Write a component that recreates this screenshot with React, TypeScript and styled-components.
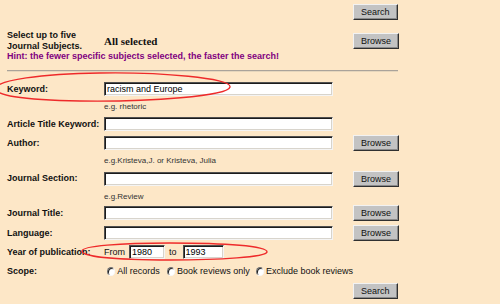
import styled, { createGlobalStyle } from 'styled-components';

const Global = createGlobalStyle`
  html, body {
    margin: 0;
    padding: 0;
    background: #fde7c7;
  }
  body {
    font-family: 'Liberation Sans', Arial, sans-serif;
    color: #111;
  }
`;

const Page = styled.form`
  position: relative;
  width: 500px;
  height: 304px;
  box-sizing: border-box;
  padding: 4px 0 0 7px;
  overflow: hidden;
  background: #fde7c7;
`;

const Row = styled.div<{ $mt: number; $h: number }>`
  display: grid;
  grid-template-columns: 97px 249px auto;
  align-items: center;
  margin-top: ${(p) => p.$mt}px;
  height: ${(p) => p.$h}px;
`;

const Label = styled.label`
  font-size: 9px;
  font-weight: bold;
  line-height: 11px;
  white-space: nowrap;
`;

const Selected = styled.span`
  font-family: 'Liberation Serif', 'Times New Roman', serif;
  font-weight: bold;
  font-size: 11px;
`;

const Hint = styled.div`
  margin-top: 3px;
  height: 12px;
  line-height: 12px;
  font-size: 9px;
  font-weight: bold;
  color: #800080;
  white-space: nowrap;
`;

const Rule = styled.hr`
  margin: 8px 0 0 0;
  width: 391px;
  height: 0;
  border: none;
  border-top: 1px solid #aaa39a;
  border-bottom: 1px solid #e6d6bc;
`;

const Note = styled.div`
  grid-column: 2;
  font-size: 8px;
  color: #333;
  white-space: nowrap;
`;

const Field = styled.input<{ $w?: number }>`
  box-sizing: border-box;
  width: ${(p) => p.$w ?? 229}px;
  height: 14px;
  margin: 0;
  padding: 0 2px;
  font-family: 'Liberation Sans', Arial, sans-serif;
  font-size: 9px;
  color: #000;
  background: #fff;
  border-style: solid;
  border-width: 1px;
  border-color: #505050 #f4f4f4 #f4f4f4 #505050;
  box-shadow: inset 1px 1px 0 #1c1c1c, inset -1px -1px 0 #d8d4cc;
  outline: none;
`;

const Button = styled.button`
  justify-self: start;
  grid-column: 3;
  height: 16px;
  padding: 0 7px;
  margin: 0;
  font-family: 'Liberation Sans', Arial, sans-serif;
  font-size: 9px;
  color: #111;
  background: #c3c3c3;
  border: 1px solid;
  border-color: #f2f2f2 #303030 #303030 #f2f2f2;
  box-shadow: inset -1px -1px 0 #8a8a8a;
`;

const Inline = styled.div`
  display: flex;
  align-items: center;
  font-size: 9px;
  white-space: nowrap;
`;

const Word = styled.span<{ $ml?: number; $mr?: number }>`
  margin-left: ${(p) => p.$ml ?? 0}px;
  margin-right: ${(p) => p.$mr ?? 0}px;
`;

const Radio = styled.span<{ $ml: number }>`
  display: inline-block;
  box-sizing: border-box;
  width: 9px;
  height: 9px;
  margin-left: ${(p) => p.$ml}px;
  margin-right: 2px;
  border-radius: 50%;
  background: #fff;
  border: 1px solid;
  border-color: #707070 #f8f8f8 #f8f8f8 #707070;
  box-shadow: inset 1px 1px 0 #222;
`;

const Marks = styled.svg`
  position: absolute;
  left: 0;
  top: 0;
  pointer-events: none;
`;

const App = () => {
  return (
    <>
      <Global />
      <Page onSubmit={(e) => e.preventDefault()}>
        <Row $mt={0} $h={16}>
          <Button type="submit">Search</Button>
        </Row>
        <Row $mt={10} $h={17}>
          <Label>
            Select up to five
            <br />
            Journal Subjects.
          </Label>
          <Selected>All selected</Selected>
          <Button type="button">Browse</Button>
        </Row>
        <Hint>Hint: the fewer specific subjects selected, the faster the search!</Hint>
        <Rule />

        <Row $mt={9} $h={16}>
          <Label>Keyword:</Label>
          <Field defaultValue="racism and Europe" />
        </Row>
        <Row $mt={3} $h={12}>
          <Note>e.g. rhetoric</Note>
        </Row>
        <Row $mt={4} $h={16}>
          <Label>Article Title Keyword:</Label>
          <Field />
        </Row>
        <Row $mt={3} $h={16}>
          <Label>Author:</Label>
          <Field />
          <Button type="button">Browse</Button>
        </Row>
        <Row $mt={3} $h={12}>
          <Note>e.g.Kristeva,J. or Kristeva, Julia</Note>
        </Row>
        <Row $mt={4} $h={17}>
          <Label>Journal Section:</Label>
          <Field />
          <Button type="button">Browse</Button>
        </Row>
        <Row $mt={3} $h={12}>
          <Note>e.g.Review</Note>
        </Row>
        <Row $mt={3} $h={16}>
          <Label>Journal Title:</Label>
          <Field />
          <Button type="button">Browse</Button>
        </Row>
        <Row $mt={4} $h={16}>
          <Label>Language:</Label>
          <Field />
          <Button type="button">Browse</Button>
        </Row>
        <Row $mt={3} $h={16}>
          <Label>Year of publication:</Label>
          <Inline>
            <Word $mr={4}>From</Word>
            <Field $w={36} defaultValue="1980" />
            <Word $ml={4} $mr={6}>to</Word>
            <Field $w={41} defaultValue="1993" />
          </Inline>
        </Row>
        <Row $mt={5} $h={12}>
          <Label>Scope:</Label>
          <Inline>
            <Radio $ml={3} />
            <Word>All records</Word>
            <Radio $ml={7} />
            <Word>Book reviews only</Word>
            <Radio $ml={6} />
            <Word>Exclude book reviews</Word>
          </Inline>
        </Row>
        <Row $mt={6} $h={16}>
          <Button type="submit">Search</Button>
        </Row>

        <Marks width="500" height="304" viewBox="0 0 500 304">
          <g fill="none" stroke="#ee2a2a" strokeWidth="1.4">
            <path d="M100 73 C 160 72, 232 78, 230 87 C 228 96, 150 102, 80 101 C 20 100, -6 95, -4 88 C -2 80, 40 74, 100 73 Z" />
            <path d="M170 243 C 225 243, 268 246, 267 252 C 266 257, 220 260, 170 260 C 120 260, 82 257, 82 251 C 82 246, 120 243, 170 243 Z" />
          </g>
        </Marks>
      </Page>
    </>
  );
};

export default App;
